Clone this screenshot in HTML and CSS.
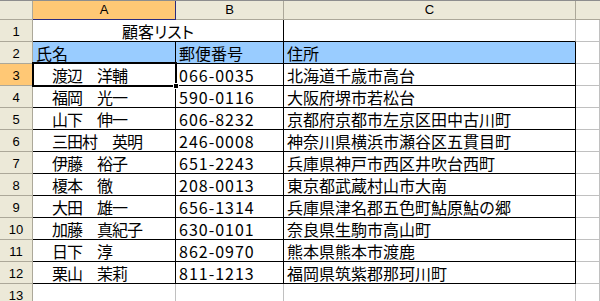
FILE: index.html
```html
<!DOCTYPE html>
<html lang="ja">
<head>
<meta charset="utf-8">
<link rel="stylesheet" href="styles.css">
</head>
<body>
<div class="sheet">
  <div class="ch corner"></div>
  <div class="ch sel">A</div>
  <div class="ch">B</div>
  <div class="ch">C</div>
  <div class="ch last"></div>

  <div class="rh">1</div>
  <div class="c merge title">顧客リスト</div>
  <div class="c bb">&nbsp;</div>
  <div class="c"></div>

  <div class="rh">2</div>
  <div class="c bk hd">氏名</div>
  <div class="c bk hd">郵便番号</div>
  <div class="c bk hd">住所</div>
  <div class="c"></div>

  <div class="rh rsel">3</div>
  <div class="c bk name">渡辺　洋輔</div>
  <div class="c bk zip">066-0035</div>
  <div class="c bk">北海道千歳市高台</div>
  <div class="c"></div>

  <div class="rh">4</div>
  <div class="c bk name">福岡　光一</div>
  <div class="c bk zip">590-0116</div>
  <div class="c bk">大阪府堺市若松台</div>
  <div class="c"></div>

  <div class="rh">5</div>
  <div class="c bk name">山下　伸一</div>
  <div class="c bk zip">606-8232</div>
  <div class="c bk">京都府京都市左京区田中古川町</div>
  <div class="c"></div>

  <div class="rh">6</div>
  <div class="c bk name">三田村　英明</div>
  <div class="c bk zip">246-0008</div>
  <div class="c bk">神奈川県横浜市瀬谷区五貫目町</div>
  <div class="c"></div>

  <div class="rh">7</div>
  <div class="c bk name">伊藤　裕子</div>
  <div class="c bk zip">651-2243</div>
  <div class="c bk">兵庫県神戸市西区井吹台西町</div>
  <div class="c"></div>

  <div class="rh">8</div>
  <div class="c bk name">榎本　徹</div>
  <div class="c bk zip">208-0013</div>
  <div class="c bk">東京都武蔵村山市大南</div>
  <div class="c"></div>

  <div class="rh">9</div>
  <div class="c bk name">大田　雄一</div>
  <div class="c bk zip">656-1314</div>
  <div class="c bk">兵庫県津名郡五色町鮎原鮎の郷</div>
  <div class="c"></div>

  <div class="rh">10</div>
  <div class="c bk name">加藤　真紀子</div>
  <div class="c bk zip">630-0101</div>
  <div class="c bk">奈良県生駒市高山町</div>
  <div class="c"></div>

  <div class="rh">11</div>
  <div class="c bk name">日下　淳</div>
  <div class="c bk zip">862-0970</div>
  <div class="c bk">熊本県熊本市渡鹿</div>
  <div class="c"></div>

  <div class="rh">12</div>
  <div class="c bk name">栗山　茉莉</div>
  <div class="c bk zip">811-1213</div>
  <div class="c bk">福岡県筑紫郡那珂川町</div>
  <div class="c"></div>

  <div class="rh">13</div>
  <div class="c"></div>
  <div class="c"></div>
  <div class="c"></div>
  <div class="c"></div>

  <div class="cursor"><span class="handle"></span></div>
</div>
</body>
</html>
```

FILE: styles.css
```css
* { box-sizing: border-box; }
html, body {
  margin: 0;
  padding: 0;
  background: #fff;
  overflow: hidden;
}
.sheet {
  position: relative;
  display: grid;
  grid-template-columns: 33px 143px 108px 292px 1fr;
  grid-template-rows: 19px repeat(13, 22px);
  border-top: 1px solid #8e8e8e;
  width: 600px;
  font-family: "Noto Sans CJK JP", sans-serif;
  font-size: 16px;
  color: #000;
}
.ch {
  background: #ece9d8;
  border-right: 1px solid #aca899;
  border-bottom: 1px solid #aca899;
  font-family: "Liberation Sans", Arial, sans-serif;
  font-size: 13px;
  text-align: center;
  line-height: 18px;
}
.ch.sel {
  background: #ffc875;
  border-right-color: #2b2b7f;
  border-bottom-color: #2b2b7f;
}
.ch.last { border-right: none; }
.rh {
  background: #ece9d8;
  border-right: 1px solid #aca899;
  border-bottom: 1px solid #aca899;
  font-family: "Liberation Sans", Arial, sans-serif;
  font-size: 13px;
  text-align: center;
  line-height: 24px;
}
.rh.rsel { background: #ffc875; }
.c {
  border-right: 1px solid #c0c0c0;
  border-bottom: 1px solid #c0c0c0;
  padding-left: 3px;
  line-height: 22px;
  white-space: nowrap;
  overflow: hidden;
}
.merge {
  grid-column: span 2;
  text-align: center;
  border-right-color: #000;
  border-bottom-color: #000;
  padding-left: 0;
}
.title { font-feature-settings: "palt"; }
.bb { border-bottom-color: #000; }
.bk {
  border-right-color: #000;
  border-bottom-color: #000;
}
.hd { background: #99ccff; }
.name {
  padding-left: 4px;
  letter-spacing: -1px;
}
.name::before { content: "　"; }
.zip { letter-spacing: 1px; }
.cursor {
  position: absolute;
  left: 32px;
  top: 61px;
  width: 145px;
  height: 25px;
  border: 2px solid #000;
  pointer-events: none;
}
.handle {
  position: absolute;
  right: -4px;
  bottom: -4px;
  width: 6px;
  height: 6px;
  background: #000;
  border: 1px solid #fff;
}
```
